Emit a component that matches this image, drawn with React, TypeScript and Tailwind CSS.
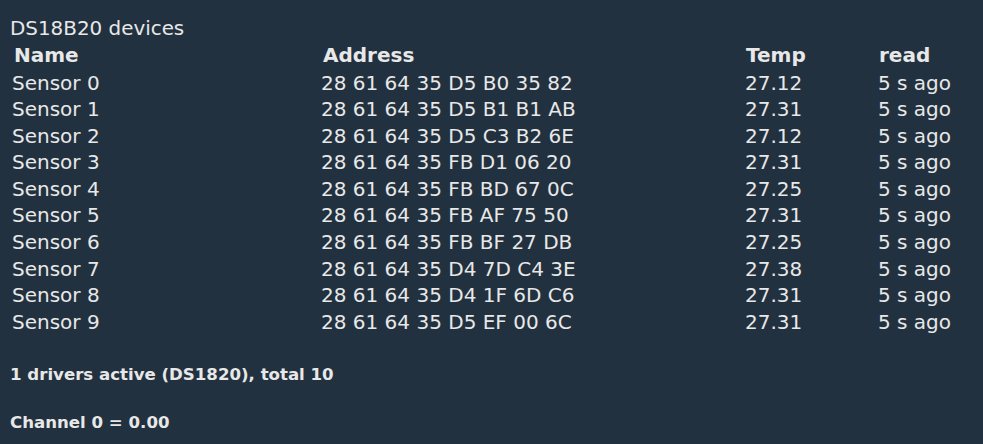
import React from "react";

const sensors = [
  ["Sensor 0", "28 61 64 35 D5 B0 35 82", "27.12"],
  ["Sensor 1", "28 61 64 35 D5 B1 B1 AB", "27.31"],
  ["Sensor 2", "28 61 64 35 D5 C3 B2 6E", "27.12"],
  ["Sensor 3", "28 61 64 35 FB D1 06 20", "27.31"],
  ["Sensor 4", "28 61 64 35 FB BD 67 0C", "27.25"],
  ["Sensor 5", "28 61 64 35 FB AF 75 50", "27.31"],
  ["Sensor 6", "28 61 64 35 FB BF 27 DB", "27.25"],
  ["Sensor 7", "28 61 64 35 D4 7D C4 3E", "27.38"],
  ["Sensor 8", "28 61 64 35 D4 1F 6D C6", "27.31"],
  ["Sensor 9", "28 61 64 35 D5 EF 00 6C", "27.31"],
];

const App: React.FC = () => {
  return (
    <div className="w-[983px] h-[444px] bg-[#22313f] text-[#e8e8e8] font-['DejaVu_Sans',sans-serif] px-[10px] pt-[18px] overflow-hidden">
      {/* Title */}
      <div className="h-[21.7px] flex items-center text-[19.9px]">DS18B20 devices</div>

      {/* Table */}
      <div className="pl-[2px]">
        <div className="grid grid-cols-[309px_424px_133px_1fr] h-[28px] items-center text-[20px] font-bold">
          <div className="pl-[2px]">Name</div>
          <div className="pl-[2px]">Address</div>
          <div className="pl-[1px]">Temp</div>
          <div className="pl-[1px]">read</div>
        </div>
        {sensors.map((s) => (
          <div
            key={s[0]}
            className="grid grid-cols-[309px_424px_133px_1fr] h-[26.56px] items-center text-[20px]"
          >
            <div>{s[0]}</div>
            <div>{s[1]}</div>
            <div>{s[2]}</div>
            <div>5 s ago</div>
          </div>
        ))}
      </div>

      {/* Footer */}
      <div className="mt-[32px] h-[20px] flex items-center text-[16.6px] font-bold">
        1 drivers active (DS1820), total 10
      </div>
      <div className="mt-[28.7px] h-[20px] flex items-center text-[16.6px] font-bold">
        Channel 0 = 0.00
      </div>
    </div>
  );
};

export default App;
